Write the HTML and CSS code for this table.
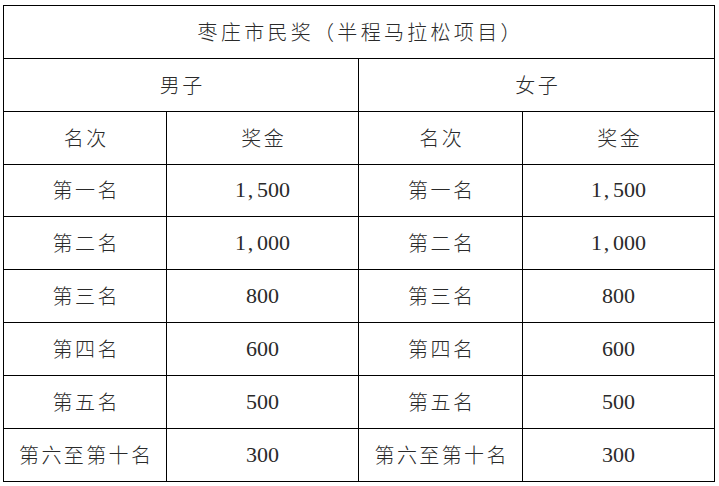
FILE: index.html
```html
<!DOCTYPE html>
<html lang="zh">
<head>
<meta charset="utf-8">
<link rel="stylesheet" href="styles.css">
</head>
<body>
<table class="prize">
  <colgroup>
    <col class="c1"><col class="c2"><col class="c3"><col class="c4">
  </colgroup>
  <tr><td colspan="4" class="zh title">枣庄市民奖（半程马拉松项目）</td></tr>
  <tr><td colspan="2" class="zh">男子</td><td colspan="2" class="zh">女子</td></tr>
  <tr><td class="zh">名次</td><td class="zh">奖金</td><td class="zh">名次</td><td class="zh">奖金</td></tr>
  <tr><td class="zh">第一名</td><td class="num">1<span class="cm">,</span>500</td><td class="zh">第一名</td><td class="num">1<span class="cm">,</span>500</td></tr>
  <tr><td class="zh">第二名</td><td class="num">1<span class="cm">,</span>000</td><td class="zh">第二名</td><td class="num">1<span class="cm">,</span>000</td></tr>
  <tr><td class="zh">第三名</td><td class="num">800</td><td class="zh">第三名</td><td class="num">800</td></tr>
  <tr><td class="zh">第四名</td><td class="num">600</td><td class="zh">第四名</td><td class="num">600</td></tr>
  <tr><td class="zh">第五名</td><td class="num">500</td><td class="zh">第五名</td><td class="num">500</td></tr>
  <tr><td class="zh">第六至第十名</td><td class="num">300</td><td class="zh">第六至第十名</td><td class="num">300</td></tr>
</table>
</body>
</html>
```
FILE: styles.css
```css
html, body {
  margin: 0;
  padding: 0;
  background: #ffffff;
}
body {
  padding: 5px 0 0 3px;
}
.prize {
  border-collapse: collapse;
  table-layout: fixed;
  width: 712px;
}
.c1 { width: 163px; }
.c2 { width: 192px; }
.c3 { width: 164px; }
.c4 { width: 192px; }
.prize td {
  border: 1px solid #000;
  height: 51.85px;
  padding: 0;
  text-align: center;
  vertical-align: middle;
  color: #2a2a2a;
}
.zh {
  font-family: "Noto Sans CJK SC", sans-serif;
  font-weight: 300;
  font-size: 20px;
  letter-spacing: 2.4px;
  text-indent: 2.4px;
  line-height: 1;
}
.zh.title {
  letter-spacing: 3.3px;
  text-indent: 3.3px;
}
.num {
  font-family: "Liberation Serif", serif;
  font-size: 22px;
  line-height: 1;
  color: #111;
}
.cm {
  display: inline-block;
  width: 0.5em;
  text-align: left;
  padding-left: 0.08em;
  box-sizing: border-box;
}
```
